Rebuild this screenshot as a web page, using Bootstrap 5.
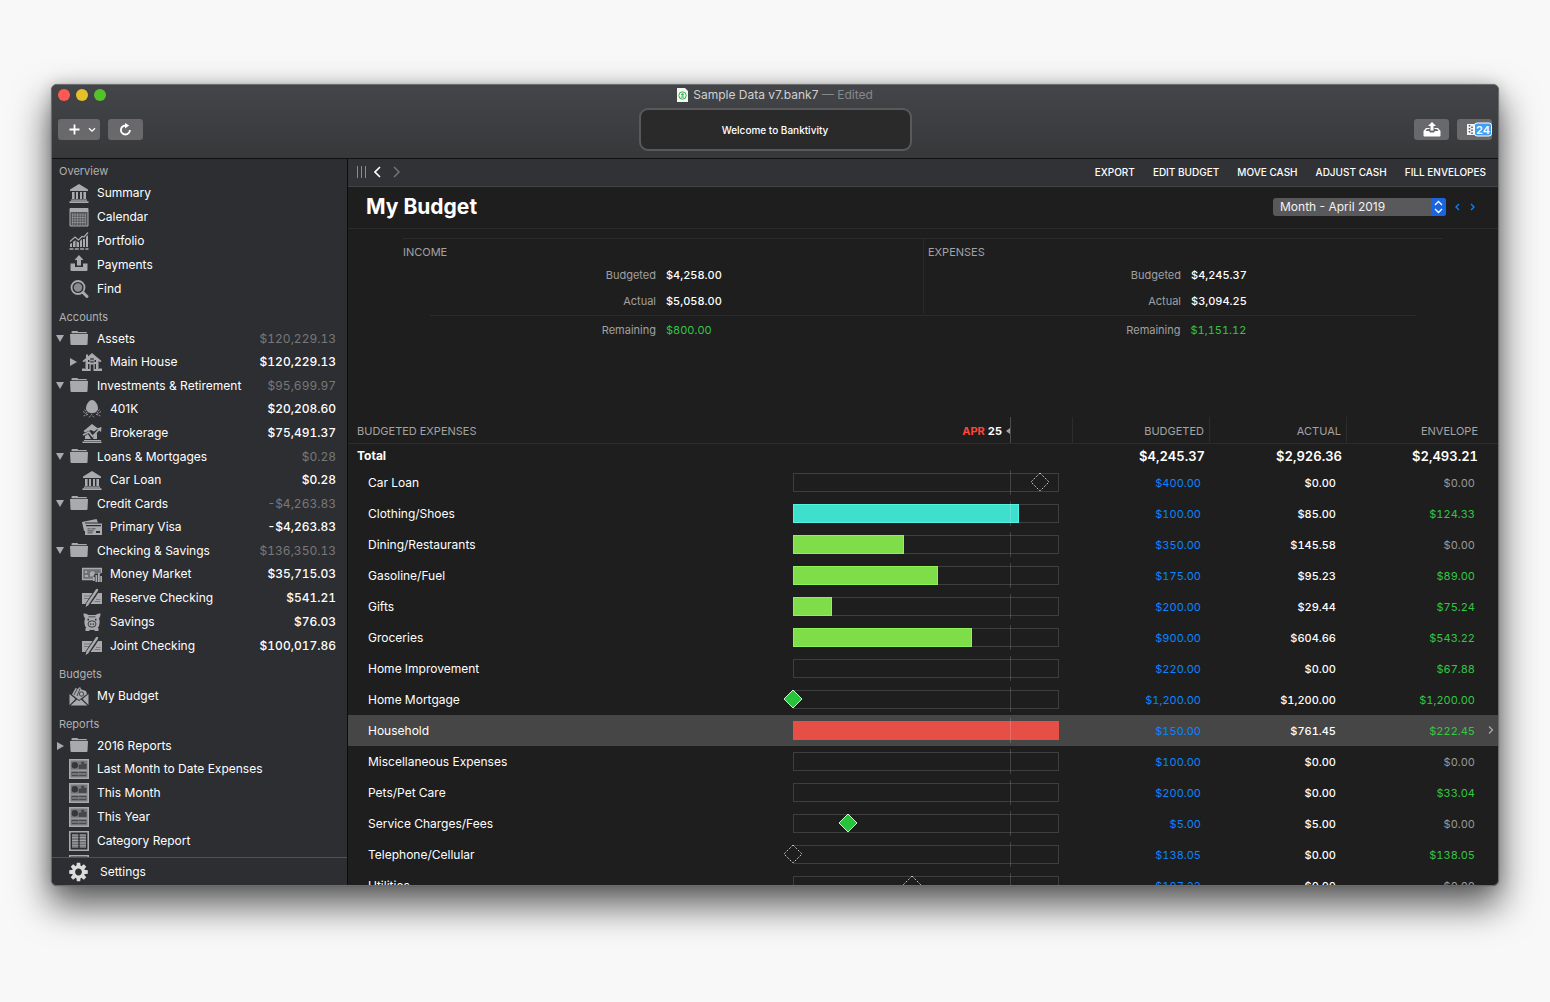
<!DOCTYPE html>
<html lang="en" data-bs-theme="dark">
<head>
<meta charset="utf-8">
<meta name="viewport" content="width=device-width, initial-scale=1">
<title>Sample Data v7.bank7</title>
<link href="https://cdn.jsdelivr.net/npm/bootstrap@5.3.0/dist/css/bootstrap.min.css" rel="stylesheet">
<style>
  body { background: #f8f8f8; font-family: Inter, "Liberation Sans", sans-serif; font-size: 12px; line-height: 16px; color: #fff; padding: 84px 51px 116px; }
  button { font-family: inherit; }
  svg { display: block; flex: none; }
  .app-window { background: #1e1e1e; border: 1px solid #6c6d6f; border-radius: 6px; box-shadow: 0 0 1px rgba(0,0,0,.4), 0 0 14px rgba(0,0,0,.16), 0 18px 36px 2px rgba(0,0,0,.62); }
  .app-head { background: linear-gradient(#444548, #37383a); border-bottom: 1px solid #111; padding-bottom: 5px; }
  .title-row { height: 21px; padding: 0 6px 2px; display: grid; grid-template-columns: 1fr auto 1fr; }
  .light { width: 12px; height: 12px; border-radius: 50%; border: 0; padding: 0; }
  .light.close-win { background: #ff5a52; }
  .light.min-win { background: #e6c029; }
  .light.zoom-win { background: #53c22b; }
  .doc-title { color: #d0d0d2; gap: 5px; }
  .doc-title span { color: #87888a; }
  .tool-row { height: 47px; padding: 0 6px; display: grid; grid-template-columns: 1fr auto 1fr; align-items: center; }
  .tool-btn { background: #69696c; border: 0; border-radius: 3px; height: 21px; min-width: 35px; padding: 0; color: #fff; display: inline-flex; align-items: center; justify-content: center; }
  .tool-btn.wide { min-width: 42px; gap: 8px; padding-left: 6px; }
  .status-box { width: 273px; height: 43px; background: #2a2a2b; border: 2px solid #59595b; border-radius: 9px; font-size: 10px; font-weight: 500; }

  .side { width: 296px; background: #2d2e31; border-right: 1px solid #0c0c0c; }
  .side-scroll { padding-top: 2px; overflow: hidden; }
  .side h2 { font-size: 11px; line-height: 20px; height: 20px; font-weight: 400; color: #b0b1b3; margin: 0; padding-left: 7px; }
  .side ul { margin: 0 0 6px; }
  .side li a { display: flex; align-items: center; height: 24px; color: #fff; text-decoration: none; padding-right: 11px; padding-left: 4px; font-weight: 400; }
  .side li.folder a { height: 23px; }
  .side li.folder a b { color: #77787a; font-weight: 400; }
  .side li a b { margin-left: auto; font-weight: 500; font-variant-numeric: tabular-nums; }
  .side li a .twist { width: 8px; margin-right: 4px; }
  .side li a .pic { width: 22px; margin-right: 7px; color: #a9aaad; }
  .side li.child a { padding-left: 17px; }
  .side-foot { border-top: 1px solid #515255; height: 28px; }
  .side-foot a { color: #fff; text-decoration: none; font-weight: 400; gap: 11px; padding-left: 16px; }

  .nav-row { height: 28px; background: #313235; border-bottom: 1px solid #424346; padding: 0 12px 1px 9px; }
  .nav-row button, .step { background: none; border: 0; padding: 0; color: #fff; }
  .nav-row .actions { gap: 18px; }
  .nav-row .actions button { font-size: 10px; font-weight: 500; color: #fff; }
  .title-bar { height: 42px; border-bottom: 1px solid #2b2b2b; padding: 0 18px 1px 18px; }
  .title-bar h1 { font-size: 21px; line-height: 26px; font-weight: 700; margin: 0; }
  .period { width: 173px; height: 18px; }
  .period select { appearance: none; width: 100%; height: 18px; border: 0; border-radius: 3px; background: #59595b; color: #f2f2f2; font-size: 12px; line-height: 16px; padding: 0 22px 0 7px; font-family: inherit; }
  .period svg { position: absolute; right: 0; top: 0; pointer-events: none; }
  .step { color: #0a84ff; width: 15px; display: inline-flex; justify-content: center; }

  .totals { margin: 9px 55px 0; min-height: 179px; border-top: 1px solid #2b2b2b; }
  .half { padding-top: 5px; }
  .half + .half { padding-left: 4px; border-left: 1px solid #292929; }
  .half h2 { font-size: 11px; line-height: 16px; font-weight: 400; color: #a3a3a3; margin: 0 0 2px; }
  .figs { display: grid; grid-template-columns: 253fr 257fr; column-gap: 10px; margin: 0; font-size: 11px; line-height: 26px; }
  .figs.shifted { padding-left: 5px; }
  .figs dt { text-align: right; font-weight: 400; color: #a0a0a0; }
  .figs dd { margin: 0; font-weight: 500; font-variant-numeric: tabular-nums; }
  .figs dd.green { font-weight: 400; }
  .rule { height: 1px; background: #2b2b2b; margin: 1px 27px; }
  .green { color: #32c644 !important; }

  .budget { table-layout: fixed; width: 100%; border-collapse: separate; border-spacing: 0; font-size: 11px; font-variant-numeric: tabular-nums; }
  .budget th, .budget td { padding: 0; vertical-align: middle; text-align: right; }
  .budget thead th { height: 27px; font-weight: 400; color: #a3a3a3; border-bottom: 1px solid #2c2c2c; padding-top: 2px; }
  .budget thead th + th { border-right: 1px solid #2c2c2c; padding-right: 5px; }
  .budget thead th:nth-child(2) { padding-right: 0; padding-top: 0; }
  .budget thead th:last-child { padding-right: 20px; border-right: 0; }
  .budget thead th:first-child { text-align: left; padding-left: 9px; }
  .today-head { width: 218px; height: 26px; padding-top: 2px; border-right: 1px solid #4c4c4c; color: #fff; font-weight: 700; gap: 4px; }
  .today-head em { color: #ff453a; font-style: normal; }
  .budget .sum th, .budget .sum td { height: 23px; font-size: 13px; font-weight: 600; padding-right: 5px; }
  .budget .sum th { text-align: left; padding-left: 9px; font-weight: 700; font-size: 12px; }
  .budget .sum td:last-child { padding-right: 20px; }
  .line th, .line td { height: 31px; font-weight: 500; }
  .line th { text-align: left !important; padding-left: 20px !important; font-size: 12px; font-weight: 400; }
  .line td:nth-child(3) { padding-right: 9px; color: #0a84ff; font-weight: 400; }
  .line td:nth-child(4) { padding-right: 11px; }
  .line td:nth-child(5) { padding-right: 23px; color: #999; font-weight: 400; position: relative; }
  .line.active th, .line.active td { background: #464646; }
  .more { position: absolute; right: 4px; top: 10px; color: #a8a8a8; }
  .track { width: 266px; height: 19px; position: relative; box-shadow: inset 0 0 0 1px #3e3e3e; margin-bottom: 1px; }
  .track .fill { height: 19px; background: #7edd48; box-shadow: inset 0 0 0 1px #8df256; }
  .track .fill.teal { background: #3fdfce; box-shadow: inset 0 0 0 1px #52f3e4; }
  .track .fill.red { background: #e54f46; box-shadow: none; }
  .track::after { content: ""; position: absolute; left: 82%; margin-left: -1px; top: -3px; bottom: -3px; width: 1px; background: rgba(255,255,255,.17); }
  .track svg { position: absolute; top: -1px; margin-left: -10px; z-index: 1; }
</style>
<script src="https://cdn.jsdelivr.net/npm/bootstrap@5.3.0/dist/js/bootstrap.bundle.min.js"></script>
</head>
<body class="vh-100 overflow-hidden">

<svg width="0" height="0" class="position-absolute" aria-hidden="true">
  <symbol id="i-bank" viewBox="0 0 22 20"><path fill="currentColor" d="M11 1 L20 6.500 V8 H2 V6.500Z M4 9h2.600v7H4z M8 9h2v7H8z M12 9h2v7h-2z M15.400 9H18v7h-2.600z M3 16.500h16v1.200H3z M1.500 18.200h19V20h-19z"/></symbol>
  <symbol id="i-cal" viewBox="0 0 22 20"><path fill="currentColor" opacity=".3" d="M2 1h18v18H2z"/><path fill="none" stroke="currentColor" d="M2 1.500h18v17.500H2z"/><path fill="currentColor" d="M2 1h18v4H2z"/><path fill="none" stroke="currentColor" stroke-width=".8" opacity=".65" d="M4 8h14M4 10.500h14M4 13h14M4 15.500h14M4.500 6v12M7 6v12M9.600 6v12M12.200 6v12M14.800 6v12M17.400 6v12"/></symbol>
  <symbol id="i-port" viewBox="0 0 22 20"><path fill="currentColor" d="M2 13l2-1v4H2z M5 11l2.500-2v7H5z M8.500 10l2.500 1.500V16H8.500z M12 10l2-2v8h-2z M15 8h2v8h-2z M18 6l2-2v12h-2z"/><path fill="none" stroke="currentColor" stroke-width="1.200" d="M2 10.500 7 6l3.500 3L14 5.500l2 .5L20 1.500"/><path stroke="currentColor" stroke-width="1.500" stroke-dasharray="4 1.300" d="M1.500 18h19"/></symbol>
  <symbol id="i-pay" viewBox="0 0 22 20"><path fill="currentColor" d="M11 0 15.500 5H13V10.500H9V5H6.500z M2.500 8.500H7V12h8V8.500h4.500V15a1 1 0 0 1-1 1h-15a1 1 0 0 1-1-1z"/></symbol>
  <symbol id="i-find" viewBox="0 0 22 20"><circle cx="10" cy="8.500" r="4.200" fill="currentColor" opacity=".75"/><circle cx="10" cy="8.500" r="6.500" fill="none" stroke="currentColor" stroke-width="1.800"/><path stroke="currentColor" stroke-width="3" stroke-linecap="round" d="m15 13.500 4 4"/></symbol>
  <symbol id="i-folder" viewBox="0 0 22 20"><path fill="currentColor" d="M3.500 3.500V3q0-1 1-1h4.500q1 0 1.200 1H18q1 0 1 1v.3H3.500z M2 5h18l-.5 10.300q0 .7-1 .7h-15q-.9 0-1-.7z"/></symbol>
  <symbol id="i-house" viewBox="0 0 22 20"><path fill="currentColor" fill-rule="evenodd" d="M11 1 20.500 9l-1.200 1.200L17.500 8.900V17H20v2H2v-2h2.500V8.900L2.700 10.200 1.500 9zM7 8v2h1.500V8zM9.500 6v2h1.200V6zM11.400 6v2h1.200V6zM9.500 8.700v2h1.200v-2zM11.400 8.700v2h1.200v-2zM13.500 8v2H15V8zM7 12v5h1.500v-5zM9.700 12.500V19h2.800v-6.500zM13.700 12v5H15v-5z"/><path fill="currentColor" d="M5 2.500h2V6H5zM1 16.500h3V19H1zM18 16.500h3V19h-3z"/></symbol>
  <symbol id="i-egg" viewBox="0 0 22 20"><path fill="currentColor" d="M11 1c3.300 0 6 5 6 8.300 0 3-2.700 4.900-6 4.900s-6-1.900-6-4.900C5 6 7.700 1 11 1z"/><path fill="none" stroke="currentColor" stroke-width=".8" stroke-dasharray="2 .8" d="M2 12.500 7 16M2.500 17l5-2M20 12.500 15 16M19.500 17l-5-2M8 18.500l2.500-3 2.500 3M3.500 10.500 6 14M18.500 10.500 16 14"/></symbol>
  <symbol id="i-brok" viewBox="0 0 22 20"><path fill="currentColor" d="M11 1 17 5.500 13 8.500 10 7 4 9.500 2.500 8zM3 17h17v1H3zM1.500 18.500h19V20h-19zM4 13l3-2 3 5H4zM13 12l3-2v6h-4z"/><path fill="none" stroke="currentColor" stroke-width="1.700" d="m2 12 6-3 3.500 4.500L18.500 6"/><path fill="currentColor" d="m20.500 4-.5 5-4.500-3.500z"/></symbol>
  <symbol id="i-card" viewBox="0 0 22 20"><path fill="currentColor" fill-rule="evenodd" d="M1 5 15.500 2l1.500 3.500H4V14H3z M4 6.500h17V18H4z M5 8v1.200h15V8z M15 14v2h4v-2zM6.500 11.500v.8h3v-.8zM10.500 11.500v.8h4v-.8zM6.500 13.500v.8h6v-.8zM6.500 15.500v.8h5v-.8z"/></symbol>
  <symbol id="i-money" viewBox="0 0 22 20"><path fill="currentColor" opacity=".55" d="M2 5h18v5h-6l-2 5H2z"/><path fill="none" stroke="currentColor" stroke-width="1.300" d="M12 15.500H1.600v-11h18.800V9"/><path fill="currentColor" d="M4 7h2v2H4zM4 11h3v2H4zM9 8.500a3 3 0 0 1 5 0l-2 4H9zM12 13h1.800v4H12zM14.500 11h1.800v7h-1.800zM17 9h1.800v9H17zM19.300 12H21v6h-1.700z"/></symbol>
  <symbol id="i-check" viewBox="0 0 22 20"><path fill="currentColor" d="M1 5h11L5 16H1zM14.500 9l-5 7H21V5h-4z"/><path stroke="#6d6e71" stroke-width=".8" d="M3 8h7M3 10.500h5M15 11.500h4.500M13.500 13.500h6"/><path stroke="#2d2e31" stroke-width="4" d="M16.500 1 5.500 17.500"/><path stroke="currentColor" stroke-width="2.400" stroke-linecap="round" d="M16 2 6.500 16"/><path fill="currentColor" d="m4.500 19 1-3.500 2.200 1.400z"/></symbol>
  <symbol id="i-pig" viewBox="0 0 22 20"><path fill="currentColor" d="M2.500 1.500q3-.5 5 1.500h7q2-2 5-1.500.3 3-1.500 5 1.500 3.500 0 7.500-2 4-7 4t-7-4q-1.500-4 0-7.500-1.800-2-1.500-5zM4.500 16h4v3h-4zM13.500 16h4v3h-4z"/><ellipse cx="11" cy="12" rx="4" ry="3.200" fill="none" stroke="#2d2e31" stroke-width=".9"/><path fill="#2d2e31" d="M9.300 11.300h1v1.700h-1zM11.800 11.300h1v1.700h-1zM7.500 4.500h7v.8h-7zM6.500 6.800H8v1.700H6.500zM14 6.800h1.500v1.700H14z"/></symbol>
  <symbol id="i-env" viewBox="0 0 22 20"><path fill="currentColor" d="M1.500 8 7.500 13 1.500 19zM20.500 8l-6 5 6 6zM2.500 19.500 9 13.500l2 1.500 2-1.500 6.500 6zM4 8.500 7.500 2l2 1L12 1l1.500 2.500L18 5l1 3-8 6z"/><path fill="none" stroke="#2d2e31" stroke-width=".8" d="m6 9 3-6M9 10l3-7.500"/><circle cx="13.500" cy="8" r="2.200" fill="none" stroke="#2d2e31" stroke-width=".8"/></symbol>
  <symbol id="i-dash" viewBox="0 0 22 20"><path fill="currentColor" opacity=".6" d="M2 1h18v18H2z"/><path fill="none" stroke="currentColor" stroke-width="1.600" d="M1.800.8h18.400v18.400H1.800z"/><circle cx="6.800" cy="6.200" r="3.200" fill="#36373a"/><path fill="#4a4b4e" stroke="#36373a" stroke-width=".5" d="M11 6h2v3.500h-2zM13.600 3h2v6.500h-2zM16.200 5h2v4.500h-2zM4 13.500h6.200v3H4zM11.500 13.500H18v3h-6.500z"/><path stroke="currentColor" stroke-width=".9" d="M4 15h14M3 11.300h16"/></symbol>
  <symbol id="i-table" viewBox="0 0 22 20"><path fill="none" stroke="currentColor" stroke-width="1.600" d="M1.800.8h18.400v18.400H1.800z"/><path fill="currentColor" opacity=".5" d="M4 3.500h6.300v13.500H4zM11.700 3.500H18v13.500h-6.300z"/><path stroke="currentColor" stroke-width="1" d="M4 4h6.300M11.700 4H18M4 6.700h6.300M11.700 6.700H18M4 9.400h6.300M11.700 9.400H18M4 12.100h6.300M11.700 12.100H18M4 14.800h6.300M11.700 14.800H18"/></symbol>
  <symbol id="i-down" viewBox="0 0 8 8"><path fill="#a9aaad" d="M0 0h8L4 7z"/></symbol>
  <symbol id="i-right" viewBox="0 0 8 8"><path fill="#a9aaad" d="M1 0l7 4-7 4z"/></symbol>
  <symbol id="i-full" viewBox="0 0 20 20"><path fill="#25c43a" stroke="#c9f5cf" d="M10 1l9 9-9 9-9-9z"/></symbol>
  <symbol id="i-open" viewBox="0 0 20 20"><path fill="#1e1e1e" stroke="#c4c4c4" stroke-dasharray="2 1.500" d="M10 1l9 9-9 9-9-9z"/></symbol>
</svg>

<div class="app-window h-100 d-flex flex-column overflow-hidden">
  <header class="app-head">
    <div class="title-row">
      <div class="d-flex align-items-center" style="gap:6px">
        <button class="light close-win" aria-label="Close"></button>
        <button class="light min-win" aria-label="Minimize"></button>
        <button class="light zoom-win" aria-label="Zoom"></button>
      </div>
      <div class="doc-title d-flex align-items-center">
        <svg width="11" height="14" viewBox="0 0 11 14"><path fill="#f4f6f4" d="M0 0h8l3 3v11H0z"/><circle cx="5.500" cy="7.500" r="3.700" fill="none" stroke="#2fb545"/><circle cx="5.500" cy="6.500" r="1.300" fill="#2fb545"/><path fill="#2fb545" d="M3.300 9.500q2.200-2.500 4.400 0z"/></svg>
        <div>Sample Data v7.bank7 <span>— Edited</span></div>
      </div>
    </div>
    <div class="tool-row">
      <div class="d-flex gap-2">
        <button class="tool-btn wide" aria-label="Add"><svg width="11" height="11" viewBox="0 0 11 11"><path stroke="#fff" stroke-width="1.800" d="M5.500 .5v10M.5 5.500h10"/></svg><svg width="8" height="6" viewBox="0 0 8 6"><path fill="none" stroke="#fff" stroke-width="1.300" d="m1 1.200 3 3 3-3"/></svg></button>
        <button class="tool-btn" aria-label="Update"><svg width="13" height="13" viewBox="0 0 13 13"><path fill="none" stroke="#fff" stroke-width="1.800" d="M10.900 7A4.500 4.500 0 1 1 6.500 2.500"/><path fill="#fff" d="M6 0l4.200 2.500L6 5.500z"/></svg></button>
      </div>
      <div class="status-box d-flex align-items-center justify-content-center">Welcome to Banktivity</div>
      <div class="d-flex gap-2 justify-content-end">
        <button class="tool-btn" aria-label="Share"><svg width="18" height="15" viewBox="0 0 18 15"><path fill="#fff" d="M9 0l4 4h-2.500v4.500h-3V4H5zM3 6h3.500v1H4L2.500 9H6l1 1.500h4L12 9h3.500L14 7h-2.500V6H15l2.500 3v4.500q0 1-1 1h-15q-1 0-1-1V9z"/></svg></button>
        <button class="tool-btn" aria-label="Calendar"><svg width="34" height="21" viewBox="0 0 34 21"><rect x="9" y="5" width="8" height="11" fill="#f4f4f4"/><path stroke="#555" stroke-width="1.500" stroke-dasharray="1.500 1.500" d="M11.500 6v9M14 7.500v8"/><rect x="16.500" y="4" width="17" height="13" rx="2.500" fill="#3ba0f7" stroke="#fff"/><text x="25" y="14.500" text-anchor="middle" font-size="11" font-weight="600" fill="#fff" font-family="Inter, sans-serif">24</text></svg></button>
      </div>
    </div>
  </header>

  <div class="d-flex flex-grow-1" style="min-height:0">
    <aside class="side d-flex flex-column flex-shrink-0">
      <nav class="side-scroll flex-grow-1" aria-label="Sidebar">
        <h2>Overview</h2>
        <ul class="list-unstyled">
          <li><a href="#"><span class="twist"></span><svg class="pic" height="20"><use href="#i-bank"/></svg>Summary</a></li>
          <li><a href="#"><span class="twist"></span><svg class="pic" height="20"><use href="#i-cal"/></svg>Calendar</a></li>
          <li><a href="#"><span class="twist"></span><svg class="pic" height="20"><use href="#i-port"/></svg>Portfolio</a></li>
          <li><a href="#"><span class="twist"></span><svg class="pic" height="20"><use href="#i-pay"/></svg>Payments</a></li>
          <li><a href="#"><span class="twist"></span><svg class="pic" height="20"><use href="#i-find"/></svg>Find</a></li>
        </ul>
        <h2>Accounts</h2>
        <ul class="list-unstyled">
          <li class="folder"><a href="#"><svg class="twist" height="8"><use href="#i-down"/></svg><svg class="pic" height="20"><use href="#i-folder"/></svg>Assets<b>$120,229.13</b></a></li>
          <li class="child"><a href="#"><svg class="twist" height="8"><use href="#i-right"/></svg><svg class="pic" height="20"><use href="#i-house"/></svg>Main House<b>$120,229.13</b></a></li>
          <li class="folder"><a href="#"><svg class="twist" height="8"><use href="#i-down"/></svg><svg class="pic" height="20"><use href="#i-folder"/></svg>Investments &amp; Retirement<b>$95,699.97</b></a></li>
          <li class="child"><a href="#"><span class="twist"></span><svg class="pic" height="20"><use href="#i-egg"/></svg>401K<b>$20,208.60</b></a></li>
          <li class="child"><a href="#"><span class="twist"></span><svg class="pic" height="20"><use href="#i-brok"/></svg>Brokerage<b>$75,491.37</b></a></li>
          <li class="folder"><a href="#"><svg class="twist" height="8"><use href="#i-down"/></svg><svg class="pic" height="20"><use href="#i-folder"/></svg>Loans &amp; Mortgages<b>$0.28</b></a></li>
          <li class="child"><a href="#"><span class="twist"></span><svg class="pic" height="20"><use href="#i-bank"/></svg>Car Loan<b>$0.28</b></a></li>
          <li class="folder"><a href="#"><svg class="twist" height="8"><use href="#i-down"/></svg><svg class="pic" height="20"><use href="#i-folder"/></svg>Credit Cards<b>-$4,263.83</b></a></li>
          <li class="child"><a href="#"><span class="twist"></span><svg class="pic" height="20"><use href="#i-card"/></svg>Primary Visa<b>-$4,263.83</b></a></li>
          <li class="folder"><a href="#"><svg class="twist" height="8"><use href="#i-down"/></svg><svg class="pic" height="20"><use href="#i-folder"/></svg>Checking &amp; Savings<b>$136,350.13</b></a></li>
          <li class="child"><a href="#"><span class="twist"></span><svg class="pic" height="20"><use href="#i-money"/></svg>Money Market<b>$35,715.03</b></a></li>
          <li class="child"><a href="#"><span class="twist"></span><svg class="pic" height="20"><use href="#i-check"/></svg>Reserve Checking<b>$541.21</b></a></li>
          <li class="child"><a href="#"><span class="twist"></span><svg class="pic" height="20"><use href="#i-pig"/></svg>Savings<b>$76.03</b></a></li>
          <li class="child"><a href="#"><span class="twist"></span><svg class="pic" height="20"><use href="#i-check"/></svg>Joint Checking<b>$100,017.86</b></a></li>
        </ul>
        <h2>Budgets</h2>
        <ul class="list-unstyled">
          <li><a href="#"><span class="twist"></span><svg class="pic" height="20"><use href="#i-env"/></svg>My Budget</a></li>
        </ul>
        <h2>Reports</h2>
        <ul class="list-unstyled">
          <li class="folder"><a href="#"><svg class="twist" height="8"><use href="#i-right"/></svg><svg class="pic" height="20"><use href="#i-folder"/></svg>2016 Reports</a></li>
          <li><a href="#"><span class="twist"></span><svg class="pic" height="20"><use href="#i-dash"/></svg>Last Month to Date Expenses</a></li>
          <li><a href="#"><span class="twist"></span><svg class="pic" height="20"><use href="#i-dash"/></svg>This Month</a></li>
          <li><a href="#"><span class="twist"></span><svg class="pic" height="20"><use href="#i-dash"/></svg>This Year</a></li>
          <li><a href="#"><span class="twist"></span><svg class="pic" height="20"><use href="#i-table"/></svg>Category Report</a></li>
          <li><a href="#" aria-label="Report"><span class="twist"></span><svg class="pic" height="20"><use href="#i-table"/></svg></a></li>
        </ul>
      </nav>
      <div class="side-foot d-flex align-items-center flex-shrink-0">
        <a href="#" class="d-flex align-items-center"><svg width="21" height="20" viewBox="-10 -10 20 20"><g fill="#dcdcdd"><g id="teeth"><path d="M-1.700-9.300h3.400l.5 4h-4.400zM-1.700 9.300h3.400l.5-4h-4.400z"/><path d="M-9.300-1.700v3.400l4 .5v-4.400zM9.300-1.700v3.400l-4 .5v-4.400z"/></g><use href="#teeth" transform="rotate(45)"/></g><circle r="4.900" fill="none" stroke="#dcdcdd" stroke-width="3"/></svg>Settings</a>
      </div>
    </aside>

    <main class="flex-grow-1 overflow-hidden" style="min-width:0">
      <div class="nav-row d-flex align-items-center justify-content-between">
        <div class="d-flex align-items-center">
          <svg width="9" height="12" viewBox="0 0 9 12"><path stroke="#8a8b8d" d="M.5 0v12M4.500 0v12M8.500 0v12"/></svg>
          <button class="ms-2" aria-label="Back"><svg width="7" height="12" viewBox="0 0 7 12"><path fill="none" stroke="#fff" stroke-width="1.600" d="M6 1 1 6l5 5"/></svg></button>
          <button class="ms-2 ps-1" aria-label="Forward"><svg width="7" height="12" viewBox="0 0 7 12"><path fill="none" stroke="#77787a" stroke-width="1.400" d="m1 1 5 5-5 5"/></svg></button>
        </div>
        <div class="actions d-flex">
          <button>EXPORT</button><button>EDIT BUDGET</button><button>MOVE CASH</button><button>ADJUST CASH</button><button>FILL ENVELOPES</button>
        </div>
      </div>
      <div class="title-bar d-flex align-items-center justify-content-between">
        <h1>My Budget</h1>
        <div class="d-flex align-items-center">
          <div class="period position-relative me-1">
            <select aria-label="Period"><option>Month - April 2019</option></select>
            <svg width="15" height="18" viewBox="0 0 15 18"><path fill="#1a64e0" d="M0 0h12q3 0 3 3v12q0 3-3 3H0z"/><path fill="none" stroke="#fff" stroke-width="1.300" d="m4 7 3.500-3.500L11 7M4 11l3.500 3.500L11 11"/></svg>
          </div>
          <button class="step" aria-label="Previous"><svg width="5" height="8" viewBox="0 0 5 8"><path fill="none" stroke="currentColor" stroke-width="1.300" d="M4 1 1 4l3 3"/></svg></button>
          <button class="step" aria-label="Next"><svg width="5" height="8" viewBox="0 0 5 8"><path fill="none" stroke="currentColor" stroke-width="1.300" d="m1 1 3 3-3 3"/></svg></button>
        </div>
      </div>

      <section class="totals">
        <div class="row g-0">
          <div class="col-6 half"><h2>INCOME</h2><dl class="figs"><dt>Budgeted</dt><dd>$4,258.00</dd><dt>Actual</dt><dd>$5,058.00</dd></dl></div>
          <div class="col-6 half"><h2>EXPENSES</h2><dl class="figs shifted"><dt>Budgeted</dt><dd>$4,245.37</dd><dt>Actual</dt><dd>$3,094.25</dd></dl></div>
        </div>
        <div class="rule"></div>
        <div class="row g-0">
          <div class="col-6"><dl class="figs"><dt>Remaining</dt><dd class="green">$800.00</dd></dl></div>
          <div class="col-6 ps-1"><dl class="figs shifted"><dt>Remaining</dt><dd class="green">$1,151.12</dd></dl></div>
        </div>
      </section>

      <table class="budget">
        <colgroup><col><col style="width:280px"><col style="width:137px"><col style="width:137px"><col style="width:151px"></colgroup>
        <thead>
          <tr><th>BUDGETED EXPENSES</th><th><div class="today-head d-flex align-items-center justify-content-end"><span><em>APR</em> 25</span><svg width="4" height="6" viewBox="0 0 4 6"><path fill="#a3a3a3" d="M4 0v6L0 3z"/></svg></div></th><th>BUDGETED</th><th>ACTUAL</th><th>ENVELOPE</th></tr>
        </thead>
        <tbody>
          <tr class="sum"><th>Total</th><td></td><td>$4,245.37</td><td>$2,926.36</td><td>$2,493.21</td></tr>
          <tr class="line"><th>Car Loan</th><td><div class="track"><svg width="20" height="20" style="left:92.9%"><use href="#i-open"/></svg></div></td><td>$400.00</td><td>$0.00</td><td>$0.00</td></tr>
          <tr class="line"><th>Clothing/Shoes</th><td><div class="track"><div class="fill teal" style="width:85%"></div></div></td><td>$100.00</td><td>$85.00</td><td class="green">$124.33</td></tr>
          <tr class="line"><th>Dining/Restaurants</th><td><div class="track"><div class="fill" style="width:41.6%"></div></div></td><td>$350.00</td><td>$145.58</td><td>$0.00</td></tr>
          <tr class="line"><th>Gasoline/Fuel</th><td><div class="track"><div class="fill" style="width:54.4%"></div></div></td><td>$175.00</td><td>$95.23</td><td class="green">$89.00</td></tr>
          <tr class="line"><th>Gifts</th><td><div class="track"><div class="fill" style="width:14.7%"></div></div></td><td>$200.00</td><td>$29.44</td><td class="green">$75.24</td></tr>
          <tr class="line"><th>Groceries</th><td><div class="track"><div class="fill" style="width:67.2%"></div></div></td><td>$900.00</td><td>$604.66</td><td class="green">$543.22</td></tr>
          <tr class="line"><th>Home Improvement</th><td><div class="track"></div></td><td>$220.00</td><td>$0.00</td><td class="green">$67.88</td></tr>
          <tr class="line"><th>Home Mortgage</th><td><div class="track"><svg width="20" height="20" style="left:0%"><use href="#i-full"/></svg></div></td><td>$1,200.00</td><td>$1,200.00</td><td class="green">$1,200.00</td></tr>
          <tr class="line active"><th>Household</th><td><div class="track"><div class="fill red" style="width:100%"></div></div></td><td>$150.00</td><td>$761.45</td><td class="green">$222.45<svg class="more" width="6" height="10" viewBox="0 0 6 10"><path fill="none" stroke="currentColor" stroke-width="1.300" d="m1 1.500 3.500 3.500L1 8.500"/></svg></td></tr>
          <tr class="line"><th>Miscellaneous Expenses</th><td><div class="track"></div></td><td>$100.00</td><td>$0.00</td><td>$0.00</td></tr>
          <tr class="line"><th>Pets/Pet Care</th><td><div class="track"></div></td><td>$200.00</td><td>$0.00</td><td class="green">$33.04</td></tr>
          <tr class="line"><th>Service Charges/Fees</th><td><div class="track"><svg width="20" height="20" style="left:20.7%"><use href="#i-full"/></svg></div></td><td>$5.00</td><td>$5.00</td><td>$0.00</td></tr>
          <tr class="line"><th>Telephone/Cellular</th><td><div class="track"><svg width="20" height="20" style="left:0%"><use href="#i-open"/></svg></div></td><td>$138.05</td><td>$0.00</td><td class="green">$138.05</td></tr>
          <tr class="line"><th>Utilities</th><td><div class="track"><svg width="20" height="20" style="left:44.7%"><use href="#i-open"/></svg></div></td><td>$107.22</td><td>$0.00</td><td>$0.00</td></tr>
        </tbody>
      </table>
    </main>
  </div>
</div>
</body>
</html>
